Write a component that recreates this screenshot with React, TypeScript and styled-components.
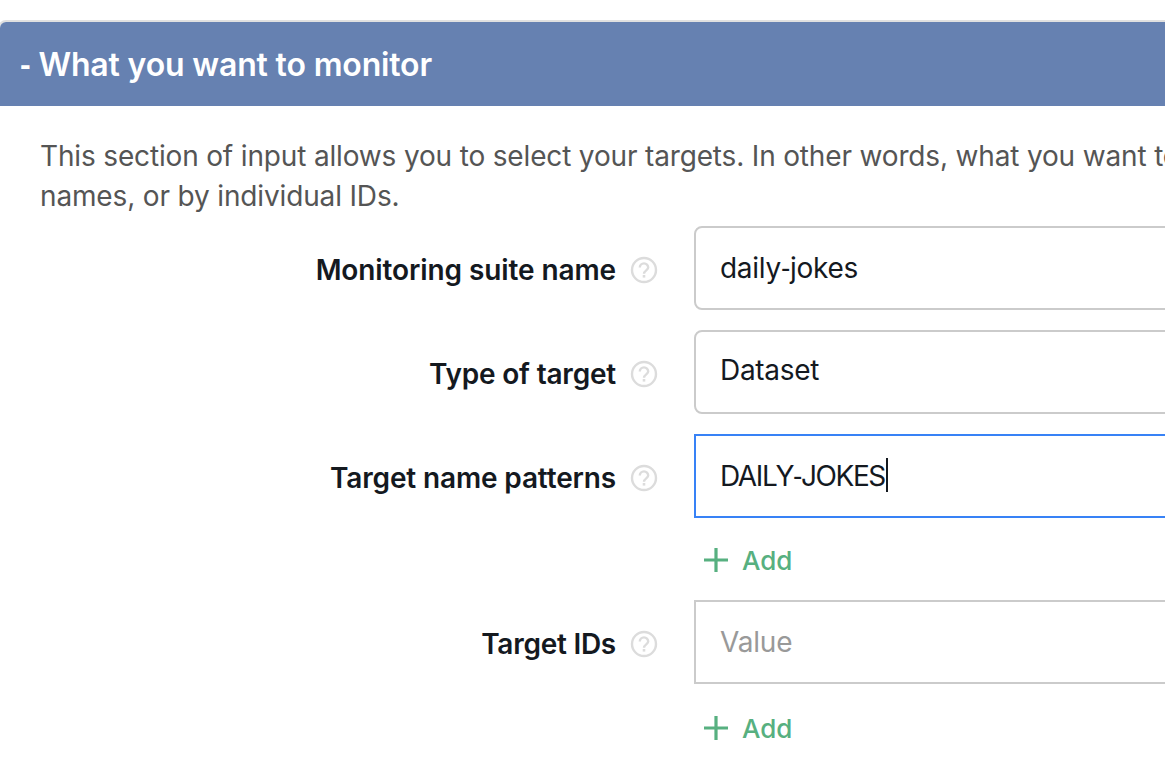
import React from "react";
import styled, { createGlobalStyle } from "styled-components";

const GlobalStyle = createGlobalStyle`
  * { box-sizing: border-box; }
  html, body { margin: 0; background: #fff; overflow: hidden; }
  body { font-family: Inter, "Liberation Sans", sans-serif; font-size: 28px; color: #14191f; }
`;

const Page = styled.main`
  width: 100vw;
  height: 100vh;
  padding-top: 20px;
  overflow: hidden;
`;

const Panel = styled.section`
  width: 1400px;
  margin-left: -2px;
  border: 2px solid #e0e0e0;
  border-bottom: 0;
  border-radius: 8px 8px 0 0;
  overflow: hidden;
`;

const PanelHeader = styled.header`
  display: flex;
  align-items: center;
  height: 84px;
  padding: 2px 20px 0;
  background: #6681b1;
  color: #fff;
`;

const Title = styled.h2`
  margin: 0;
  font-size: 32px;
  line-height: 40px;
  font-weight: 600;
  letter-spacing: -0.16px;
  white-space: pre;
`;

const Dash = styled.span<{ $bold?: boolean }>`
  font-family: "Liberation Sans", Arial, sans-serif;
  font-weight: ${(p) => (p.$bold ? 700 : 400)};
  line-height: 1;
  vertical-align: 1px;
`;

const PanelBody = styled.div`
  padding: 30px 40px 0;
`;

const Description = styled.p`
  margin: 0 0 10px;
  line-height: 40px;
  color: #555;
  white-space: nowrap;
`;

const Line = styled.span<{ $spacing: number }>`
  display: block;
  letter-spacing: ${(p) => p.$spacing}px;
`;

const Row = styled.div`
  display: grid;
  grid-template-columns: 576px 78px 1fr;
  margin-bottom: 20px;
`;

const Label = styled.label<{ $spacing: number }>`
  height: 84px;
  line-height: 88px;
  text-align: right;
  font-weight: 600;
  letter-spacing: ${(p) => p.$spacing}px;
  white-space: nowrap;
`;

const HelpSlot = styled.span`
  display: flex;
  align-items: center;
  height: 84px;
  padding: 4px 0 0 14px;
`;

const FieldBox = styled.div<{ $focused?: boolean; $square?: boolean; $muted?: boolean; $lift?: number; $spacing: number }>`
  display: flex;
  align-items: center;
  height: 84px;
  padding: 0 24px ${(p) => p.$lift ?? 0}px;
  border: 2px solid ${(p) => (p.$focused ? "#3882f6" : "#cbcbcb")};
  border-radius: ${(p) => (p.$square ? 0 : 8)}px;
  color: ${(p) => (p.$muted ? "#999" : "inherit")};
  letter-spacing: ${(p) => p.$spacing}px;
`;

const Caret = styled.span`
  width: 2px;
  height: 34px;
  margin: 0 0 2px 1px;
  background: #14191f;
`;

const AddButton = styled.button<{ $top: number }>`
  display: flex;
  align-items: center;
  gap: 14px;
  height: 40px;
  margin: ${(p) => p.$top}px 0 0 10px;
  padding: 0;
  border: 0;
  background: none;
  color: #57b080;
  font: 500 26px/40px Inter, "Liberation Sans", sans-serif;
`;

const AddText = styled.span`
  padding-top: 2px;
`;

const HelpIcon = () => (
  <svg width="28" height="28" viewBox="0 0 28 28" fill="none" stroke="#dcdcdc" strokeWidth="2.4">
    <circle cx="14" cy="14" r="12" />
    <path d="M9.8 11.6a4.2 4.2 0 0 1 8.4 0c0 2.6-4.2 3.1-4.2 6.2" />
    <rect x="12.7" y="19" width="2.6" height="2.6" fill="#dcdcdc" stroke="none" />
  </svg>
);

const PlusIcon = () => (
  <svg width="24" height="24" viewBox="0 0 24 24" stroke="currentColor" strokeWidth="3.2">
    <path d="M12 0v24M0 12h24" />
  </svg>
);

const Add = ({ top }: { top: number }) => (
  <AddButton type="button" $top={top}>
    <PlusIcon />
    <AddText>Add</AddText>
  </AddButton>
);

const Help = () => (
  <HelpSlot>
    <HelpIcon />
  </HelpSlot>
);

export default function App() {
  return (
    <>
      <GlobalStyle />
      <Page>
        <Panel>
          <PanelHeader>
            <Title>
              <Dash $bold>-</Dash> What you want to monitor
            </Title>
          </PanelHeader>
          <PanelBody>
            <Description>
              <Line $spacing={-0.16}>
                This section of input allows you to select your targets. In other words, what you want to
              </Line>
              <Line $spacing={-0.15}>names, or by individual IDs.</Line>
            </Description>
            <Row>
              <Label $spacing={-0.1}>Monitoring suite name</Label>
              <Help />
              <FieldBox $spacing={-0.28}>
                <span>daily<Dash>-</Dash>jokes</span>
              </FieldBox>
            </Row>
            <Row>
              <Label $spacing={-0.2}>Type of target</Label>
              <Help />
              <FieldBox $spacing={-0.3} $lift={4}>Dataset</FieldBox>
            </Row>
            <Row>
              <Label $spacing={-0.15}>Target name patterns</Label>
              <Help />
              <div>
                <FieldBox $spacing={-1.4} $square $focused>
                  <span>DAILY<Dash>-</Dash>JOKES</span>
                  <Caret />
                </FieldBox>
                <Add top={22} />
              </div>
            </Row>
            <Row>
              <Label $spacing={-0.25}>Target IDs</Label>
              <Help />
              <div>
                <FieldBox $spacing={-0.2} $square $muted>Value</FieldBox>
                <Add top={24} />
              </div>
            </Row>
          </PanelBody>
        </Panel>
      </Page>
    </>
  );
}
